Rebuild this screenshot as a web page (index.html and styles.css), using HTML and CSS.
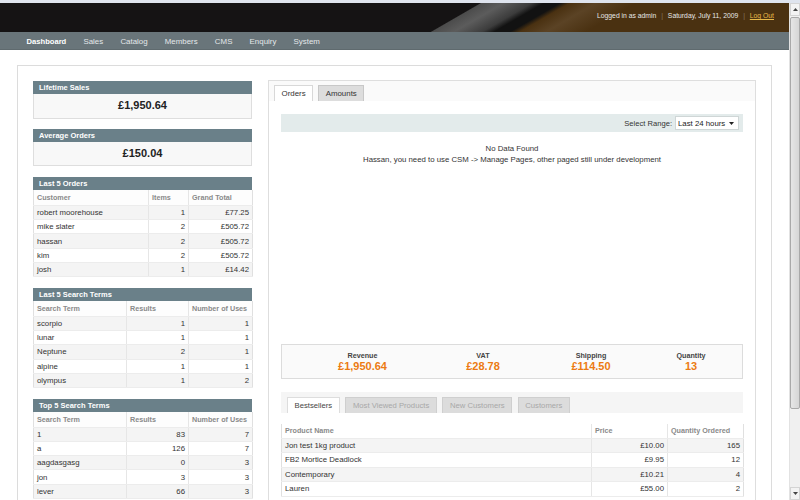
FILE: index.html
```html
<!DOCTYPE html>
<html>
<head>
<meta charset="utf-8">
<title>Dashboard</title>
<link rel="stylesheet" href="styles.css">
</head>
<body>
<div class="topline"></div>
<div class="window">
  <div class="page">
    <header class="header">
      <div class="user-info">Logged in as admin <span class="sep">|</span> Saturday, July 11, 2009 <span class="sep">|</span> <a class="logout" href="#">Log Out</a></div>
    </header>
    <nav class="nav">
      <a class="nav-item active" href="#">Dashboard</a>
      <a class="nav-item" href="#">Sales</a>
      <a class="nav-item" href="#">Catalog</a>
      <a class="nav-item" href="#">Members</a>
      <a class="nav-item" href="#">CMS</a>
      <a class="nav-item" href="#">Enquiry</a>
      <a class="nav-item" href="#">System</a>
    </nav>
    <main class="container">
      <aside class="sidebar">
        <div class="widget">
          <div class="widget-head">Lifetime Sales</div>
          <div class="widget-value">£1,950.64</div>
        </div>
        <div class="widget">
          <div class="widget-head">Average Orders</div>
          <div class="widget-value">£150.04</div>
        </div>
        <div class="widget">
          <div class="widget-head">Last 5 Orders</div>
          <table class="grid orders">
            <colgroup><col class="c-cust"><col class="c-items"><col class="c-total"></colgroup>
            <thead><tr><th>Customer</th><th>Items</th><th>Grand Total</th></tr></thead>
            <tbody>
              <tr><td>robert moorehouse</td><td class="num">1</td><td class="num">£77.25</td></tr>
              <tr><td>mike slater</td><td class="num">2</td><td class="num">£505.72</td></tr>
              <tr><td>hassan</td><td class="num">2</td><td class="num">£505.72</td></tr>
              <tr><td>kim</td><td class="num">2</td><td class="num">£505.72</td></tr>
              <tr><td>josh</td><td class="num">1</td><td class="num">£14.42</td></tr>
            </tbody>
          </table>
        </div>
        <div class="widget">
          <div class="widget-head">Last 5 Search Terms</div>
          <table class="grid terms">
            <colgroup><col class="c-term"><col class="c-res"><col class="c-uses"></colgroup>
            <thead><tr><th>Search Term</th><th>Results</th><th>Number of Uses</th></tr></thead>
            <tbody>
              <tr><td>scorpio</td><td class="num">1</td><td class="num">1</td></tr>
              <tr><td>lunar</td><td class="num">1</td><td class="num">1</td></tr>
              <tr><td>Neptune</td><td class="num">2</td><td class="num">1</td></tr>
              <tr><td>alpine</td><td class="num">1</td><td class="num">1</td></tr>
              <tr><td>olympus</td><td class="num">1</td><td class="num">2</td></tr>
            </tbody>
          </table>
        </div>
        <div class="widget">
          <div class="widget-head">Top 5 Search Terms</div>
          <table class="grid terms">
            <colgroup><col class="c-term"><col class="c-res"><col class="c-uses"></colgroup>
            <thead><tr><th>Search Term</th><th>Results</th><th>Number of Uses</th></tr></thead>
            <tbody>
              <tr><td>1</td><td class="num">83</td><td class="num">7</td></tr>
              <tr><td>a</td><td class="num">126</td><td class="num">7</td></tr>
              <tr><td>aagdasgasg</td><td class="num">0</td><td class="num">3</td></tr>
              <tr><td>jon</td><td class="num">3</td><td class="num">3</td></tr>
              <tr><td>lever</td><td class="num">66</td><td class="num">3</td></tr>
            </tbody>
          </table>
        </div>
      </aside>
      <section class="panel">
        <div class="tabs">
          <span class="tab active">Orders</span>
          <span class="tab">Amounts</span>
        </div>
        <div class="panel-body">
          <div class="range-bar">
            <span class="range-label">Select Range:</span>
            <span class="select">Last 24 hours <svg class="caret" width="5" height="3" viewBox="0 0 5 3"><path d="M0 0h5l-2.5 3z" fill="#222"/></svg></span>
          </div>
          <div class="chart">
            <p class="nodata">No Data Found<br>Hassan, you need to use CSM -&gt; Manage Pages, other paged still under development</p>
          </div>
          <div class="stats">
            <div class="stat"><div class="stat-label">Revenue</div><div class="stat-value">£1,950.64</div></div>
            <div class="stat"><div class="stat-label">VAT</div><div class="stat-value">£28.78</div></div>
            <div class="stat"><div class="stat-label">Shipping</div><div class="stat-value">£114.50</div></div>
            <div class="stat"><div class="stat-label">Quantity</div><div class="stat-value">13</div></div>
          </div>
          <div class="tabs2">
            <span class="tab2 active">Bestsellers</span>
            <span class="tab2">Most Viewed Products</span>
            <span class="tab2">New Customers</span>
            <span class="tab2">Customers</span>
          </div>
          <table class="grid products">
            <colgroup><col class="c-name"><col class="c-price"><col class="c-qty"></colgroup>
            <thead><tr><th>Product Name</th><th>Price</th><th>Quantity Ordered</th></tr></thead>
            <tbody>
              <tr><td>Jon test 1kg product</td><td class="num">£10.00</td><td class="num">165</td></tr>
              <tr><td>FB2 Mortice Deadlock</td><td class="num">£9.95</td><td class="num">12</td></tr>
              <tr><td>Contemporary</td><td class="num">£10.21</td><td class="num">4</td></tr>
              <tr><td>Lauren</td><td class="num">£55.00</td><td class="num">2</td></tr>
            </tbody>
          </table>
        </div>
      </section>
    </main>
  </div>
  <div class="scrollbar">
    <div class="sb-btn"><svg width="5" height="3" viewBox="0 0 5 3"><path d="M0 3h5l-2.5-3z" fill="#444"/></svg></div>
    <div class="sb-track"><div class="sb-thumb"></div></div>
    <div class="sb-btn"><svg width="5" height="3" viewBox="0 0 5 3"><path d="M0 0h5l-2.5 3z" fill="#444"/></svg></div>
  </div>
</div>
</body>
</html>
```

FILE: styles.css
```css
* { box-sizing: border-box; }
html, body { margin: 0; padding: 0; }
body {
  width: 800px;
  height: 500px;
  overflow: hidden;
  background: #fff;
  color: #333;
  font-family: "Liberation Sans", Arial, sans-serif;
  font-size: 7.8px;
}
a { text-decoration: none; }

.topline { height: 3px; background: #dfe4ee; }
.window { display: flex; height: 497px; }
.page { flex: 1; min-width: 0; overflow: hidden; }

/* header */
.header {
  height: 29px;
  display: flex;
  justify-content: flex-end;
  align-items: flex-start;
  padding: 8px 15px 0 0;
  background: linear-gradient(150deg,
    #151314 0, #151314 240px,
    #4c4c4c 241px, #5c5c5c 252px, #3c3c3c 266px,
    #121212 272px, #121212 280px,
    #4a3111 285px, #5b4325 298px, #4a3111 318px, #4a3111 100%);
}
.user-info { color: #e6e6e6; font-size: 6.8px; line-height: 10px; }
.user-info .sep { color: #8a7a60; margin: 0 3px; }
.logout { color: #e7b84a; text-decoration: underline; }

/* nav */
.nav {
  height: 18px;
  background: #69757a;
  display: flex;
  align-items: center;
  padding: 1px 0 0 18px;
  border-bottom: 1px solid #5f6a6e;
}
.nav-item { color: #e4e8ea; font-size: 7.9px; padding: 0 8.6px; }
.nav-item.active { color: #fff; font-weight: bold; font-size: 7.6px; }

/* container */
.container {
  margin: 15px 17px 0 17px;
  border: 1px solid #dcdcdc;
  border-bottom: none;
  padding: 15px 15px 0 15px;
  display: flex;
  gap: 16px;
  height: 500px;
}
.sidebar { width: 219px; flex: none; }
.widget { margin-bottom: 10.4px; }
.widget-head {
  height: 13px;
  line-height: 13px;
  background: #6a8089;
  color: #fff;
  font-weight: bold;
  font-size: 7.5px;
  padding-left: 6px;
}
.widget-value {
  height: 24.5px;
  line-height: 22px;
  background: #f8f8f8;
  border: 1px solid #dedede;
  border-top: none;
  text-align: center;
  font-weight: bold;
  font-size: 11px;
  color: #222;
}

/* grids */
.grid {
  width: 100%;
  border-collapse: collapse;
  table-layout: fixed;
  border: 1px solid #e0e0e0;
  border-top: none;
}
.grid th {
  height: 15.5px;
  text-align: left;
  font-weight: bold;
  font-size: 7.2px;
  color: #8a8a8a;
  padding: 0 3px;
  background: #fdfdfd;
  border-left: 1px solid #e6e6e6;
  border-bottom: 1px solid #ececec;
}
.grid td {
  height: 14.3px;
  padding: 0 3px;
  font-size: 7.8px;
  color: #333;
  border-left: 1px solid #e6e6e6;
  border-bottom: 1px solid #ececec;
  white-space: nowrap;
  overflow: hidden;
}
.grid th:first-child, .grid td:first-child { border-left: none; }
.grid tbody tr:nth-child(odd) td { background: #f4f4f4; }
.grid tbody tr:nth-child(even) td { background: #fff; }
.grid td.num { text-align: right; }

.c-cust { width: 115px; }
.c-items { width: 40px; }
.c-total { width: 64px; }
.c-term { width: 93px; }
.c-res { width: 62px; }
.c-uses { width: 64px; }
.c-name { width: 310px; }
.c-price { width: 76px; }
.c-qty { width: 76px; }

/* panel */
.panel {
  width: 488px;
  flex: none;
  border: 1px solid #dedede;
  border-bottom: none;
  margin-top: -1px;
  align-self: flex-start;
  height: 440px;
}
.tabs {
  height: 20px;
  background: #fafafa;
  padding: 4px 0 0 5px;
  display: flex;
  gap: 5px;
  align-items: flex-end;
}
.tab {
  height: 16px;
  line-height: 15px;
  padding: 0 6.5px;
  font-size: 7.9px;
  color: #333;
  background: #ddd;
  border: 1px solid #c8c8c8;
  border-bottom: none;
}
.tab.active { background: #fff; border-color: #d8d8d8; }
.panel-body { padding: 13px 12px 0 12px; }
.range-bar {
  height: 18px;
  background: #e3ebeb;
  display: flex;
  justify-content: flex-end;
  align-items: center;
  padding-right: 4px;
  gap: 3px;
  font-size: 7.6px;
  color: #333;
}
.select {
  width: 64px;
  height: 14px;
  background: #fff;
  border: 1px solid #cfd6d6;
  display: flex;
  align-items: center;
  justify-content: space-between;
  padding: 0 4px 0 2px;
  font-size: 7.8px;
  color: #222;
}
.caret { flex: none; }
.chart { height: 212px; padding-top: 11px; }
.nodata { margin: 0; text-align: center; line-height: 11px; font-size: 7.8px; color: #333; }

.stats {
  height: 35px;
  border: 1px solid #dcdcdc;
  background: #fafafa;
  display: grid;
  grid-template-columns: 161px 80px 136px 64px;
  padding-top: 6px;
  text-align: center;
}
.stat-label { font-weight: bold; font-size: 7.2px; color: #444; line-height: 9px; }
.stat-value { font-weight: bold; font-size: 11px; color: #ec7a12; line-height: 13px; }

.tabs2 {
  margin-top: 13px;
  height: 21px;
  background: #f5f5f5;
  padding: 5px 0 0 6px;
  display: flex;
  gap: 5.5px;
}
.tab2 {
  height: 16px;
  line-height: 15px;
  padding: 0 6.6px;
  font-size: 7.7px;
  color: #a8a8a8;
  background: #dcdcdc;
  border: 1px solid #cfcfcf;
  border-bottom: none;
}
.tab2.active { background: #fff; color: #444; border-color: #ddd; }
.products { margin-top: 11px; }
.products th { height: 14px; background: #fff; }
.products td { height: 14.5px; }

/* scrollbar */
.scrollbar {
  width: 11px;
  flex: none;
  display: flex;
  flex-direction: column;
  background: #f0f0f0;
  border-left: 1px solid #e2e2e2;
}
.sb-btn {
  height: 13px;
  display: flex;
  align-items: center;
  justify-content: center;
  background: #f3f3f3;
  border: 1px solid #d4d4d4;
}
.sb-track { flex: 1; padding-top: 1px; }
.sb-thumb {
  height: 392px;
  background: linear-gradient(90deg, #e6e6e6, #d6d6d6);
  border: 1px solid #a9a9a9;
  border-radius: 2px;
}
```
